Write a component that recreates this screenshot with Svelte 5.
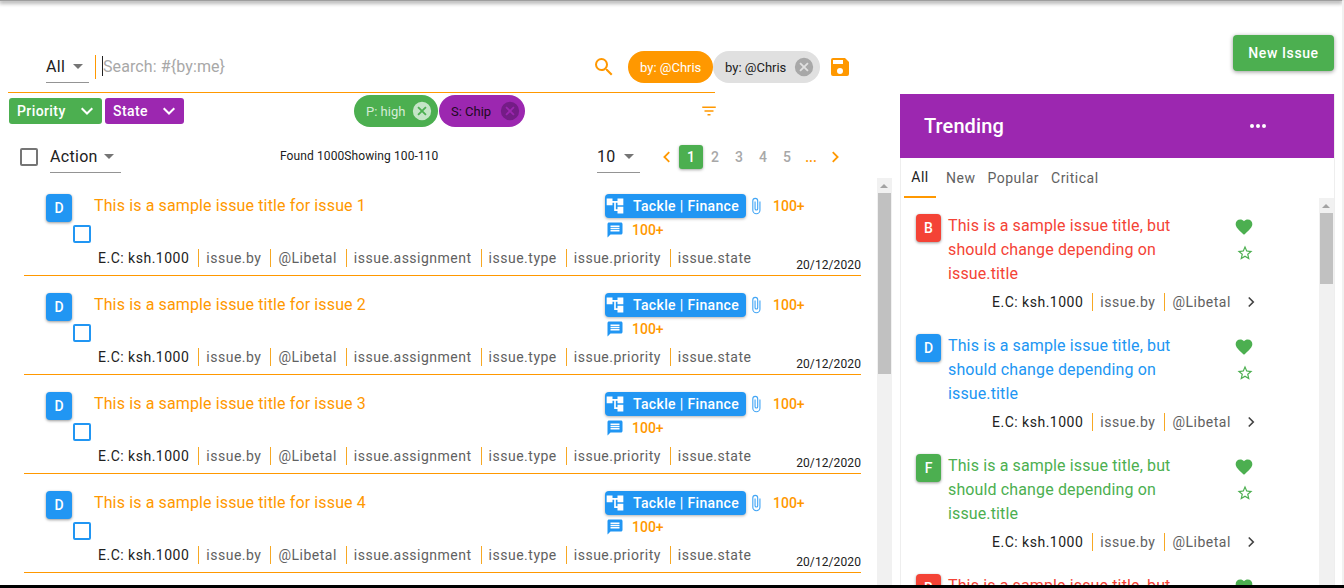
<script lang="ts">
  const issues = [1, 2, 3, 4, 5];
  const metaCols = ['issue.by', '@Libetal', 'issue.assignment', 'issue.type', 'issue.priority', 'issue.state'];
  const trending = [
    { letter: 'B', color: '#f44336' },
    { letter: 'D', color: '#2196f3' },
    { letter: 'F', color: '#4caf50' },
    { letter: 'B', color: '#f44336' }
  ];
  const tabs = ['All', 'New', 'Popular', 'Critical'];
  const pages = ['2', '3', '4', '5'];
</script>

<div class="topbar"></div>

<div class="page">
  <section class="left">
    <div class="search-row">
      <div class="select all-select">
        <span>All</span>
        <i class="caret"></i>
      </div>
      <div class="search-input">
        <span class="cursor"></span>
        <span class="placeholder">Search: #&#123;by:me&#125;</span>
      </div>
      <svg class="search-icon" viewBox="0 0 24 24" width="24" height="24">
        <path fill="#ff9800" d="M15.5 14h-.79l-.28-.27A6.47 6.47 0 0 0 16 9.5 6.5 6.5 0 1 0 9.5 16c1.61 0 3.09-.59 4.23-1.57l.27.28v.79l5 4.99L20.49 19l-4.99-5zm-6 0C7.01 14 5 11.99 5 9.5S7.01 5 9.5 5 14 7.01 14 9.5 11.99 14 9.5 14z" />
      </svg>
      <span class="chip chip-orange">by: @Chris</span>
      <span class="chip chip-grey">
        by: @Chris
        <svg viewBox="0 0 24 24" width="22" height="22"><path fill="#a8a8a8" d="M12 2a10 10 0 1 0 0 20 10 10 0 0 0 0-20zm5 13.6L15.6 17 12 13.4 8.4 17 7 15.6l3.6-3.6L7 8.4 8.4 7l3.6 3.600L15.6 7 17 8.4 13.4 12l3.6 3.6z" /></svg>
      </span>
      <svg class="save-icon" viewBox="0 0 24 24" width="24" height="24">
        <path fill="#ff9800" d="M17 3H5a2 2 0 0 0-2 2v14a2 2 0 0 0 2 2h14a2 2 0 0 0 2-2V7l-4-4zm-5 16a3 3 0 1 1 0-6 3 3 0 0 1 0 6zm3-10H5V5h10v4z" />
      </svg>
    </div>

    <div class="filter-row">
      <button class="filter green">Priority
        <svg viewBox="0 0 24 24" width="24" height="24"><path fill="none" stroke="#fff" stroke-width="2" d="M6.7 9.2 12 14.5l5.3-5.3" /></svg>
      </button>
      <button class="filter purple">State
        <svg viewBox="0 0 24 24" width="24" height="24"><path fill="none" stroke="#fff" stroke-width="2" d="M6.7 9.2 12 14.5l5.3-5.3" /></svg>
      </button>
      <span class="chip chip-green">P: high
        <svg viewBox="0 0 24 24" width="22" height="22"><path fill="#c5e5c7" d="M12 2a10 10 0 1 0 0 20 10 10 0 0 0 0-20zm5 13.6L15.6 17 12 13.4 8.4 17 7 15.6l3.6-3.6L7 8.4 8.4 7l3.6 3.600L15.6 7 17 8.4 13.4 12l3.6 3.6z" /></svg>
      </span>
      <span class="chip chip-purple">S: Chip
        <svg viewBox="0 0 24 24" width="22" height="22"><path fill="#741c86" d="M12 2a10 10 0 1 0 0 20 10 10 0 0 0 0-20zm5 13.6L15.6 17 12 13.4 8.4 17 7 15.6l3.6-3.6L7 8.4 8.4 7l3.6 3.600L15.6 7 17 8.4 13.4 12l3.6 3.6z" /></svg>
      </span>
      <svg class="filter-icon" viewBox="0 0 24 24" width="18" height="18"><path fill="#ff9800" d="M10 18h4v-2h-4v2zM3 6v2h18V6H3zm3 7h12v-2H6v2z" /></svg>
    </div>

    <div class="action-row">
      <span class="checkbox"></span>
      <div class="select action-select">
        <span>Action</span>
        <i class="caret"></i>
      </div>
      <span class="found">Found 1000Showing 100-110</span>
      <div class="select size-select">
        <span>10</span>
        <i class="caret"></i>
      </div>
      <nav class="pager">
        <svg class="prev" viewBox="0 0 24 24" width="18" height="18"><path fill="none" stroke="#ff9800" stroke-width="2.4" d="M15 5.5 8.5 12l6.5 6.5" /></svg>
        <span class="page-no active">1</span>
        {#each pages as p}
          <span class="page-no">{p}</span>
        {/each}
        <span class="page-no dots">...</span>
        <svg class="next" viewBox="0 0 24 24" width="18" height="18"><path fill="none" stroke="#ff9800" stroke-width="2.4" d="M9 5.5 15.5 12 9 18.5" /></svg>
      </nav>
    </div>

    <div class="list-wrap">
      <div class="list">
        {#each issues as n}
          <article class="issue">
            <div class="issue-side">
              <span class="badge blue">D</span>
              <span class="issue-check"></span>
            </div>
            <div class="issue-main">
              <div class="issue-top">
                <h3>This is a sample issue title for issue {n}</h3>
                <div class="issue-tags">
                  <div class="tag-line">
                    <span class="tackle">
                      <svg viewBox="0 0 24 24" width="20" height="20"><path fill="#fff" d="M22 11V3h-7v3H9V3H2v8h7V8h2v10h4v3h7v-8h-7v3h-2V8h2v3h7z" /></svg>
                      Tackle | Finance
                    </span>
                    <svg class="clip" viewBox="0 0 24 24" width="18" height="22"><path fill="#42a5f5" d="M16.5 6v11.5a4 4 0 0 1-8 0V5a2.5 2.5 0 0 1 5 0v10.5a1 1 0 0 1-2 0V6H10v9.5a2.500 2.500 0 0 0 5 0V5a4 4 0 0 0-8 0v12.5a5.5 5.5 0 0 0 11 0V6h-1.500z" /></svg>
                    <span class="count">100+</span>
                  </div>
                  <div class="tag-line second">
                    <svg viewBox="0 0 24 24" width="18" height="18"><path fill="#2196f3" d="M20 2H4c-1.100 0-2 .9-2 2v18l4-4h14c1.100 0 2-.9 2-2V4c0-1.100-.9-2-2-2zm-2 12H6v-2h12v2zm0-3H6V9h12v2zm0-3H6V6h12v2z" /></svg>
                    <span class="count">100+</span>
                  </div>
                </div>
              </div>
              <div class="issue-meta">
                <span class="ec">E.C: ksh.1000</span>
                {#each metaCols as col}
                  <span class="meta-col">{col}</span>
                {/each}
                <span class="date">20/12/2020</span>
              </div>
            </div>
          </article>
        {/each}
      </div>
      <div class="scrollbar left-scroll">
        <i class="arrow"></i>
        <i class="thumb"></i>
      </div>
    </div>
  </section>

  <aside class="right">
    <div class="new-row">
      <button class="new-issue">New Issue</button>
    </div>
    <div class="card">
      <header class="card-head">
        <span>Trending</span>
        <svg viewBox="0 0 24 24" width="24" height="24"><path fill="#fff" d="M6 10a2 2 0 1 0 0 4 2 2 0 0 0 0-4zm12 0a2 2 0 1 0 0 4 2 2 0 0 0 0-4zm-6 0a2 2 0 1 0 0 4 2 2 0 0 0 0-4z" /></svg>
      </header>
      <div class="tabs">
        {#each tabs as tab, i}
          <span class="tab" class:on={i === 0}>{tab}</span>
        {/each}
      </div>
      <div class="trend-wrap">
        <div class="trend-list">
          {#each trending as t}
            <article class="trend">
              <span class="badge" style="background: {t.color}">{t.letter}</span>
              <div class="trend-body">
                <div class="trend-top">
                  <p style="color: {t.color}">This is a sample issue title, but should change depending on issue.title</p>
                  <div class="trend-icons">
                    <svg viewBox="0 0 24 24" width="20" height="20"><path fill="#4caf50" d="m12 21.350-1.450-1.320C5.400 15.360 2 12.280 2 8.500 2 5.420 4.420 3 7.500 3c1.740 0 3.410.81 4.500 2.090C13.090 3.810 14.760 3 16.500 3 19.580 3 22 5.420 22 8.500c0 3.780-3.400 6.860-8.550 11.540L12 21.350z" /></svg>
                    <svg class="star" viewBox="0 0 24 24" width="18" height="18"><path fill="#4caf50" d="M22 9.240l-7.190-.62L12 2 9.190 8.630 2 9.240l5.460 4.730L5.820 21 12 17.270 18.180 21l-1.630-7.030L22 9.240zM12 15.400l-3.760 2.270 1-4.280-3.320-2.880 4.380-.38L12 6.100l1.710 4.040 4.380.38-3.320 2.880 1 4.280L12 15.400z" /></svg>
                  </div>
                </div>
                <div class="trend-meta">
                  <span class="ec">E.C: ksh.1000</span>
                  <span class="meta-col">issue.by</span>
                  <span class="meta-col">@Libetal</span>
                  <svg viewBox="0 0 24 24" width="18" height="18"><path fill="none" stroke="#424242" stroke-width="2.200" d="M9 6l6 6-6 6" /></svg>
                </div>
              </div>
            </article>
          {/each}
        </div>
        <div class="scrollbar right-scroll">
          <i class="arrow"></i>
          <i class="thumb"></i>
        </div>
      </div>
    </div>
  </aside>
</div>
<div class="bottom"></div>

<style>
  :global(body) {
    margin: 0;
    background: #fff;
    overflow: hidden;
    font-family: Roboto, sans-serif;
  }

  .topbar {
    height: 1px;
    margin-right: 2px;
    background: #9e9e9e;
    box-shadow: 0 1px 4px 1px rgba(0, 0, 0, 0.45);
  }

  .page {
    height: 584px;
    display: flex;
    overflow: hidden;
  }

  .bottom {
    height: 3px;
    background: #000;
  }

  .left {
    width: 892px;
    flex: none;
    display: flex;
    flex-direction: column;
    padding-top: 48px;
    box-sizing: border-box;
  }

  /* search */
  .search-row {
    display: flex;
    align-items: flex-start;
    height: 43px;
    width: 707px;
    margin-left: 8px;
    border-bottom: 1px solid #ff9800;
    position: relative;
    flex: none;
  }

  .select {
    display: flex;
    align-items: center;
    justify-content: space-between;
    border-bottom: 1px solid #949494;
    box-sizing: border-box;
    color: #212121;
    font-size: 16px;
    letter-spacing: 0.3px;
    padding-top: 2px;
  }

  .caret {
    width: 0;
    height: 0;
    border-left: 5px solid transparent;
    border-right: 5px solid transparent;
    border-top: 5px solid #757575;
  }

  .all-select {
    width: 43px;
    height: 34px;
    margin-left: 38px;
    padding-right: 6px;
  }

  .search-input {
    margin-left: 6px;
    margin-top: 6px;
    width: 490px;
    height: 24px;
    border-left: 1px solid #ff9800;
    padding: 0 0 2px 6px;
    box-sizing: border-box;
    display: flex;
    align-items: center;
    font-size: 16px;
    letter-spacing: 0.1px;
  }

  .cursor {
    width: 1px;
    height: 20px;
    background: #212121;
  }

  .placeholder {
    color: #a8a8a8;
  }

  .search-icon {
    position: absolute;
    left: 584px;
    top: 6px;
  }

  .chip {
    display: inline-flex;
    align-items: center;
    height: 32px;
    border-radius: 16px;
    font-size: 13px;
    box-sizing: border-box;
    white-space: nowrap;
  }

  .chip-orange,
  .chip-grey {
    position: absolute;
    top: 2px;
  }

  .chip-orange {
    left: 620px;
    background: #ff9800;
    color: #fff;
    padding: 0 12px;
    width: 85px;
  }

  .chip-grey {
    left: 705px;
    background: #e0e0e0;
    color: #212121;
    padding: 0 5px 0 12px;
    width: 107px;
    justify-content: space-between;
  }

  .save-icon {
    position: absolute;
    left: 820px;
    top: 6px;
  }

  /* filters */
  .filter-row {
    display: flex;
    align-items: center;
    height: 36px;
    flex: none;
    position: relative;
    margin-left: 9px;
    gap: 3px;
  }

  .filter {
    height: 26px;
    border: 0;
    border-radius: 3px;
    color: #fff;
    font: 500 14px Roboto, sans-serif;
    letter-spacing: 0.4px;
    display: flex;
    align-items: center;
    justify-content: space-between;
    padding: 0 3px 0 8px;
  }

  .green {
    background: #4caf50;
    width: 93px;
  }

  .purple {
    background: #9c27b0;
    width: 79px;
  }

  .chip-green,
  .chip-purple {
    position: absolute;
    top: 2px;
    justify-content: space-between;
    padding: 0 5px 0 12px;
  }

  .chip-green {
    left: 345px;
    width: 84px;
    background: #4caf50;
    color: #d5ecd6;
  }

  .chip-purple {
    left: 430px;
    width: 86px;
    background: #9c27b0;
    color: #1d0a21;
    padding-right: 4px;
  }

  .filter-icon {
    position: absolute;
    left: 691px;
    top: 9px;
  }

  /* action row */
  .action-row {
    height: 49px;
    position: relative;
    flex: none;
  }

  .checkbox {
    position: absolute;
    left: 20px;
    top: 19px;
    width: 18px;
    height: 18px;
    border: 2px solid #757575;
    border-radius: 2px;
    box-sizing: border-box;
  }

  .action-select {
    position: absolute;
    left: 50px;
    top: 9px;
    width: 71px;
    height: 35px;
    padding-right: 7px;
  }

  .size-select {
    position: absolute;
    left: 597px;
    top: 9px;
    width: 43px;
    height: 35px;
    padding-right: 6px;
  }

  .found {
    position: absolute;
    left: 280px;
    top: 20px;
    font-size: 12px;
    color: #212121;
    letter-spacing: 0.1px;
  }

  .pager {
    position: absolute;
    left: 658px;
    top: 16px;
    display: flex;
    align-items: center;
    height: 24px;
  }

  .pager svg {
    flex: none;
  }

  .prev {
    margin-right: 3px;
  }

  .next {
    margin-left: 3px;
  }

  .page-no {
    width: 24px;
    height: 24px;
    display: flex;
    align-items: center;
    justify-content: center;
    font-size: 14px;
    font-weight: 500;
    color: #a8a8a8;
  }

  .active {
    background: #4caf50;
    color: #fff;
    border-radius: 3px;
    box-shadow: 0 1px 3px rgba(0, 0, 0, 0.35);
  }

  .dots {
    color: #ff9800;
  }

  /* issue list */
  .list-wrap {
    flex: 1;
    min-height: 0;
    display: flex;
    overflow: hidden;
  }

  .list {
    width: 877px;
    flex: none;
    padding: 0 16px 0 24px;
    box-sizing: border-box;
  }

  .issue {
    height: 99px;
    display: flex;
    border-bottom: 1px solid #ff9800;
    box-sizing: border-box;
    padding-top: 17px;
  }

  .issue:first-child {
    height: 98px;
    padding-top: 16px;
  }

  .issue-side {
    width: 70px;
    flex: none;
    display: flex;
    flex-direction: column;
    padding-left: 22px;
    box-sizing: border-box;
  }

  .badge {
    width: 26px;
    height: 28px;
    flex: none;
    border-radius: 4px;
    color: #fff;
    font-size: 14px;
    font-weight: 500;
    display: flex;
    align-items: center;
    justify-content: center;
    box-shadow: 0 1px 3px rgba(0, 0, 0, 0.4);
  }

  .blue {
    background: #2196f3;
  }

  .issue-check {
    width: 18px;
    height: 18px;
    margin: 3px 0 0 27px;
    border: 2px solid #2196f3;
    border-radius: 2px;
    box-sizing: border-box;
  }

  .issue-main {
    flex: 1;
    min-width: 0;
    display: flex;
    flex-direction: column;
  }

  .issue-top {
    display: flex;
    height: 55px;
  }

  h3 {
    margin: 0;
    width: 511px;
    flex: none;
    color: #ff9800;
    font-size: 16px;
    font-weight: 400;
    letter-spacing: 0.13px;
    line-height: 24px;
  }

  .issue-tags {
    display: flex;
    flex-direction: column;
  }

  .tag-line {
    display: flex;
    align-items: center;
    height: 24px;
  }

  .second {
    padding-left: 1px;
  }

  .tackle {
    width: 141px;
    height: 24px;
    box-sizing: border-box;
    background: #2196f3;
    color: #fff;
    border-radius: 4px;
    font-size: 14px;
    font-weight: 500;
    letter-spacing: 0.35px;
    display: flex;
    align-items: center;
    gap: 8px;
    white-space: nowrap;
    box-shadow: 0 1px 3px rgba(0, 0, 0, 0.3);
  }

  .clip {
    margin-left: 1px;
  }

  .count {
    color: #ff9800;
    font-size: 14px;
    font-weight: 500;
    margin-left: 8px;
  }

  .issue-meta {
    display: flex;
    align-items: center;
    height: 18px;
    position: relative;
    margin-left: 4px;
    font-size: 14px;
  }

  .ec {
    color: #212121;
    letter-spacing: 0.5px;
    white-space: nowrap;
  }

  .meta-col {
    color: #616161;
    letter-spacing: 0.5px;
    border-left: 1px solid #f7a823;
    padding: 0 0 0 7px;
    margin-left: 9px;
    line-height: 18px;
    white-space: nowrap;
  }

  .date {
    position: absolute;
    right: 0;
    top: 9px;
    font-size: 12px;
    color: #212121;
    letter-spacing: 0.1px;
  }

  .scrollbar {
    width: 15px;
    flex: none;
    background: #f1f1f1;
    position: relative;
  }

  .arrow {
    position: absolute;
    left: 3px;
    top: 6px;
    width: 0;
    height: 0;
    border-left: 4px solid transparent;
    border-right: 4px solid transparent;
    border-bottom: 4px solid #a3a3a3;
  }

  .thumb {
    position: absolute;
    left: 1px;
    right: 1px;
    top: 15px;
    background: #c1c1c1;
  }

  .left-scroll .thumb {
    height: 181px;
  }

  .right-scroll .thumb {
    height: 71px;
  }

  /* right panel */
  .right {
    flex: 1;
    min-width: 0;
    padding: 34px 7px 0 8px;
    border-right: 2px solid #f1f1f1;
    display: flex;
    flex-direction: column;
  }

  .new-row {
    height: 36px;
    margin-bottom: 23px;
    display: flex;
    justify-content: flex-end;
  }

  .new-issue {
    width: 101px;
    height: 36px;
    margin-right: 1px;
    border: 0;
    border-radius: 4px;
    background: #4caf50;
    color: #fff;
    font: 500 14px Roboto, sans-serif;
    letter-spacing: 0.6px;
    box-shadow: 0 1px 4px rgba(0, 0, 0, 0.4);
  }

  .card {
    flex: 1;
    min-height: 0;
    display: flex;
    flex-direction: column;
    border-left: 1px solid #eee;
    border-right: 1px solid #eee;
  }

  .card-head {
    height: 64px;
    flex: none;
    margin-left: -1px;
    background: #9c27b0;
    color: #fff;
    font-size: 20px;
    font-weight: 500;
    letter-spacing: 0.1px;
    display: flex;
    align-items: center;
    justify-content: space-between;
    padding: 0 64px 0 24px;
  }

  .tabs {
    display: flex;
    height: 40px;
    flex: none;
    padding-left: 3px;
    font-size: 14px;
    letter-spacing: 0.5px;
  }

  .tab {
    padding: 2px 6px 0;
    height: 38px;
    box-sizing: border-box;
    display: flex;
    align-items: center;
    color: #616161;
    justify-content: center;
  }

  .tab.on {
    color: #212121;
    width: 32px;
    border-bottom: 2px solid #ff9800;
    height: 40px;
    padding-bottom: 2px;
    margin-right: 4px;
  }

  .trend-wrap {
    flex: 1;
    min-height: 0;
    display: flex;
    overflow: hidden;
  }

  .trend-list {
    flex: 1;
    min-width: 0;
    padding: 16px 0 0 15px;
  }

  .trend {
    height: 120px;
    display: flex;
    gap: 7px;
  }

  .trend .badge {
    width: 25px;
  }

  .trend-body {
    width: 312px;
    flex: none;
  }

  .trend-top {
    display: flex;
    justify-content: space-between;
    height: 72px;
    margin-bottom: 7px;
  }

  p {
    margin: 0;
    width: 252px;
    font-size: 16px;
    line-height: 24px;
    letter-spacing: 0.13px;
  }

  .trend-icons {
    width: 26px;
    display: flex;
    flex-direction: column;
    align-items: flex-start;
    gap: 7px;
    margin-top: 3px;
  }

  .star {
    margin-left: 2px;
  }

  .trend-meta {
    display: flex;
    align-items: center;
    height: 18px;
    padding-left: 44px;
    font-size: 14px;
  }

  .trend-meta svg {
    margin-left: 11px;
  }
</style>
